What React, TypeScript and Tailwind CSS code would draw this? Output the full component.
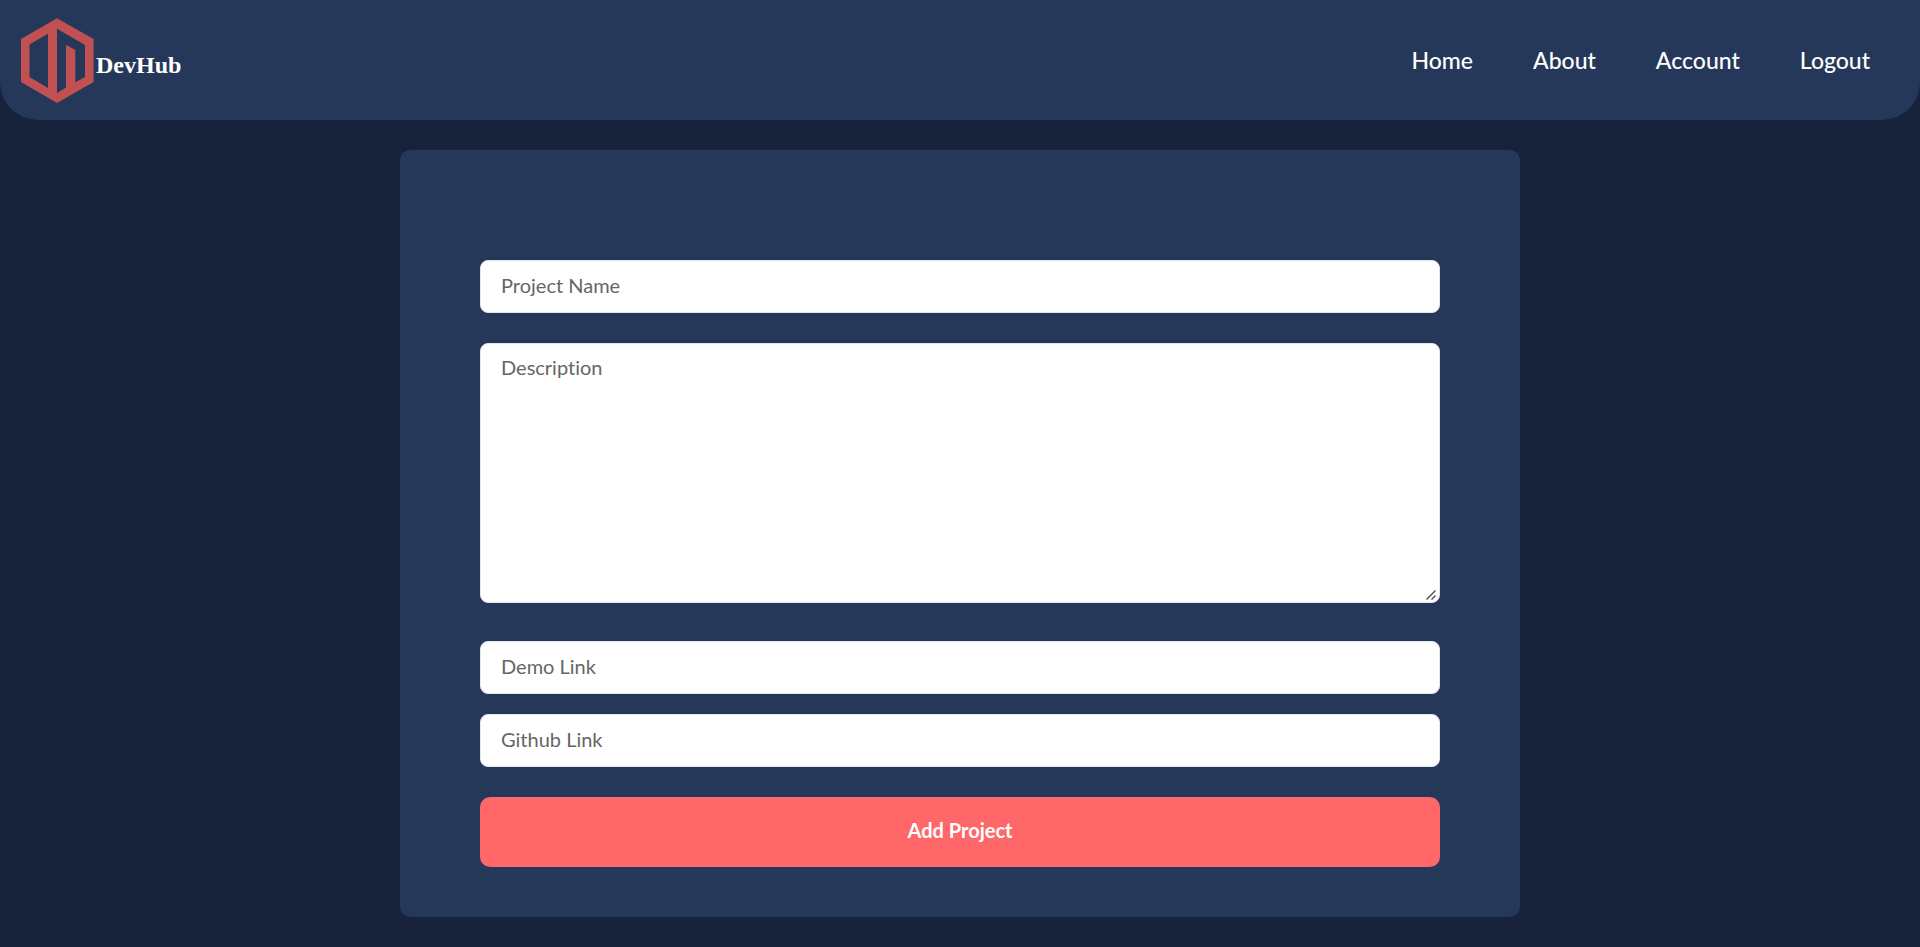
import React from "react";

const links = ["Home", "About", "Account", "Logout"];

const field =
  "block w-full rounded-lg border border-[#e2e6ee] bg-white px-5 text-xl text-[#333333] placeholder:text-[#666666] placeholder:opacity-100 outline-none focus:ring-2 focus:ring-[#ff6768]";

function Logo() {
  return (
    <svg viewBox="21 18 73 86" className="h-[86px] w-[73px]" aria-hidden="true">
      <path
        fill="#c05051"
        fillRule="evenodd"
        d="M57 18.3 L93.6 39 V82 L57 103 L21 82 V39 Z M48 33.8 L29.5 44.5 V77 L48 88 Z M57 28.8 V93 L66 87.5 V44.7 L75.3 50 V82.3 L85 77 V45 Z"
      />
    </svg>
  );
}

function ResizeGrip() {
  return (
    <svg
      viewBox="0 0 10 10"
      className="pointer-events-none absolute right-1 bottom-[3px] size-[10px]"
      stroke="#4a4a4a"
      strokeWidth="1.4"
      aria-hidden="true"
    >
      <path d="M0.5 9.5 L9.5 0.5 M5.5 9.5 L9.5 5.5" />
    </svg>
  );
}

function Header() {
  return (
    <header className="flex h-[120px] items-center justify-between rounded-b-[38px] bg-[#263859] pr-[50px] pl-[21px]">
      <a href="#home" className="flex items-center gap-0.5 pt-0.5 text-white">
        <Logo />
        <span className="pt-2 font-['Liberation_Serif',serif] text-2xl font-bold">DevHub</span>
      </a>
      <nav>
        <ul className="flex gap-[60px]">
          {links.map((label) => (
            <li key={label}>
              <a href={`#${label.toLowerCase()}`} className="text-[23px] leading-8 font-medium text-white">
                {label}
              </a>
            </li>
          ))}
        </ul>
      </nav>
    </header>
  );
}

export default function App() {
  return (
    <div className="min-h-screen bg-[#17223b] pb-[30px] font-['Lato',sans-serif] [font-variant-ligatures:no-common-ligatures]">
      <Header />
      <main className="px-4 pt-[30px]">
        <form
          className="mx-auto flex max-w-[1120px] flex-col rounded-[10px] bg-[#263859] px-20 pt-[110px] pb-[50px]"
          onSubmit={(e) => e.preventDefault()}
        >
          <input aria-label="Project Name" placeholder="Project Name" type="text" className={`${field} mb-[30px] h-[53px] pb-1`} />
          <div className="relative mb-[38px]">
            <textarea
              aria-label="Description"
              placeholder="Description"
              className={`${field} h-[260px] resize-y pt-2.5 pb-3 leading-[26px] [&::-webkit-resizer]:bg-transparent`}
            />
            <ResizeGrip />
          </div>
          <input aria-label="Demo Link" placeholder="Demo Link" type="url" className={`${field} mb-5 h-[53px] pb-1`} />
          <input aria-label="Github Link" placeholder="Github Link" type="url" className={`${field} mb-[30px] h-[53px] pb-1`} />
          <button type="submit" className="h-[70px] cursor-pointer rounded-[10px] bg-[#ff6768] pb-1 text-xl font-bold text-white">
            Add Project
          </button>
        </form>
      </main>
    </div>
  );
}
